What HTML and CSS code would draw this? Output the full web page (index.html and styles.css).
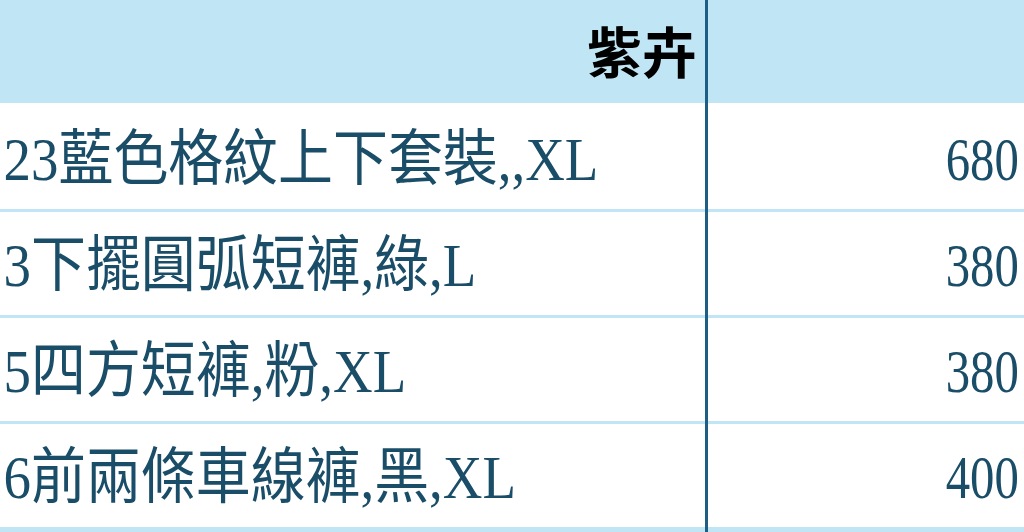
FILE: index.html
```html
<!DOCTYPE html>
<html lang="zh-Hant">
<head>
<meta charset="utf-8">
<title>紫卉</title>
<link rel="stylesheet" href="styles.css">
</head>
<body>
<div class="sheet">
  <div class="cell head name"><span class="htext">紫卉</span></div>
  <div class="cell head price"></div>

  <div class="cell name"><span class="txt">23藍色格紋上下套裝,,XL</span></div>
  <div class="cell price"><span class="num">680</span></div>

  <div class="cell name"><span class="txt">3下擺圓弧短褲,綠,L</span></div>
  <div class="cell price"><span class="num">380</span></div>

  <div class="cell name"><span class="txt">5四方短褲,粉,XL</span></div>
  <div class="cell price"><span class="num">380</span></div>

  <div class="cell name"><span class="txt">6前兩條車線褲,黑,XL</span></div>
  <div class="cell price"><span class="num">400</span></div>

  <div class="divider"></div>
</div>
</body>
</html>
```

FILE: styles.css
```css
html, body {
  margin: 0;
  padding: 0;
}
body {
  background: #c0e6f5;
  overflow: hidden;
}
.sheet {
  display: grid;
  grid-template-columns: 705px 3px 1fr;
  grid-template-rows: auto auto auto auto auto 1fr;
  height: 532px;
  font-family: "Liberation Serif", "Noto Sans CJK TC", serif;
  color: #1a4d68;
}
.cell {
  height: 103px;
  background: #ffffff;
  border-bottom: 3px solid #c0e6f5;
  display: flex;
  align-items: center;
  overflow: hidden;
  white-space: nowrap;
}
.cell.name { grid-column: 1; }
.cell.price { grid-column: 3; justify-content: flex-end; }
.cell.head {
  background: #c0e6f5;
  border-bottom-color: #ffffff;
}
.cell.head.name { justify-content: flex-end; padding-right: 8px; }
.htext {
  font-family: "Noto Sans CJK TC", sans-serif;
  font-weight: 700;
  font-size: 55px;
  line-height: 1;
  color: #000000;
  padding-bottom: 4px;
}
.txt {
  display: inline-block;
  font-size: 61px;
  line-height: 1;
  transform: scaleX(0.9);
  transform-origin: left center;
  padding-left: 4px;
  padding-top: 4px;
}
.num {
  display: inline-block;
  font-size: 61px;
  line-height: 1;
  transform: scaleX(0.8);
  transform-origin: right center;
  padding-right: 7px;
  padding-top: 4px;
}
.divider {
  grid-column: 2;
  grid-row: 1 / -1;
  background: #1e5e86;
}
```
